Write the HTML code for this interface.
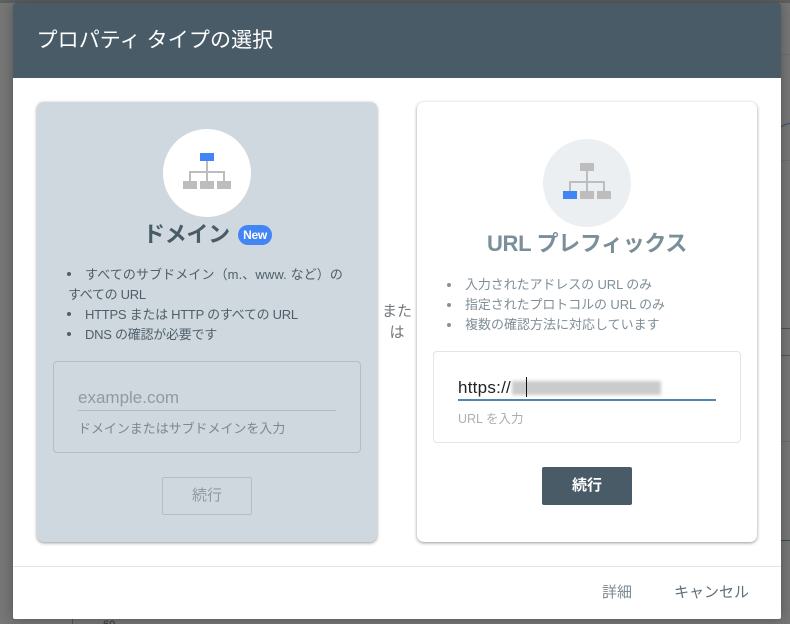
<!DOCTYPE html>
<html lang="ja">
<head>
<meta charset="utf-8">
<style>
html,body{margin:0;padding:0;overflow:hidden;height:624px}
body{width:790px;position:relative;background:#767676;font-family:"Liberation Sans","Noto Sans CJK JP",sans-serif}
.a{position:absolute;white-space:nowrap}
#dialog{position:absolute;left:13px;top:3px;width:768px;height:616px;background:#fff;border-radius:2px;box-shadow:0 0 12px rgba(0,0,0,.3)}
#head{position:absolute;left:13px;top:3px;width:768px;height:75px;background:#485b67;border-radius:2px 2px 0 0}
.card{position:absolute;top:102px;width:340px;height:440px;border-radius:7px;box-shadow:0 1px 3px rgba(60,64,67,.55)}
.li{font-size:13px;line-height:20px}
.dot{position:absolute;width:4px;height:4px;border-radius:50%}
</style>
</head>
<body>
<div class="a" style="left:0;top:0;width:790px;height:3px;background:#5f5f5f"></div>
<div class="a" style="left:781px;top:54px;width:9px;height:1px;background:#6e6e6e"></div>
<div class="a" style="left:781px;top:160px;width:9px;height:1px;background:#6e6e6e"></div>
<div class="a" style="left:781px;top:328px;width:9px;height:1px;background:#4f4f4f"></div>
<div class="a" style="left:781px;top:355px;width:9px;height:1px;background:#555"></div>
<div class="a" style="left:781px;top:441px;width:9px;height:1px;background:#6a6a6a"></div>
<div class="a" style="left:781px;top:540px;width:9px;height:1px;background:#2f5a48"></div>
<svg class="a" style="left:781px;top:120px" width="9" height="12"><path d="M0 7Q4 4 9 3.5" fill="none" stroke="#2e4f78" stroke-width="1"/></svg>
<div class="a" style="left:72px;top:619px;width:1px;height:5px;background:#555"></div>
<div class="a" style="left:103px;top:619px;font-size:11px;line-height:12px;color:#333">60</div>

<div id="dialog"></div>
<div id="head"></div>
<div class="a" style="left:36.5px;top:27px;font-size:21px;line-height:28px;color:#fff;letter-spacing:.1px">プロパティ タイプの選択</div>

<!-- left card -->
<div class="card" style="left:37px;background:#cfd8de"></div>
<div class="a" style="left:163px;top:129px;width:88px;height:88px;border-radius:50%;background:#fff"></div>
<svg class="a" style="left:183px;top:153px" width="48" height="36" viewBox="0 0 48 36">
<path d="M24 8V28M7 28V19H41V28" fill="none" stroke="#bdbdbd" stroke-width="2"/>
<rect x="17" y="0" width="14" height="8" fill="#4285f4"/>
<rect x="0" y="28" width="14" height="8" fill="#bdbdbd"/>
<rect x="17" y="28" width="14" height="8" fill="#bdbdbd"/>
<rect x="34" y="28" width="14" height="8" fill="#bdbdbd"/>
</svg>
<div class="a" style="left:143px;top:219px;font-size:22px;line-height:32px;font-weight:700;color:#485b67;letter-spacing:-.3px">ドメイン</div>
<div class="a" style="left:238px;top:225px;width:34px;height:20px;border-radius:10px;background:#4285f4;color:#fff;font-size:12px;font-weight:700;line-height:20px;text-align:center;letter-spacing:-.3px">New</div>
<div class="dot" style="left:67px;top:272px;background:#4f5f6a"></div>
<div class="a li" style="left:85px;top:265px;color:#4f5f6a;letter-spacing:.1px">すべてのサブドメイン（m.、www. など）の</div>
<div class="a li" style="left:68px;top:285px;color:#4f5f6a;letter-spacing:-.3px">すべての URL</div>
<div class="dot" style="left:67px;top:312px;background:#4f5f6a"></div>
<div class="a li" style="left:85px;top:305px;color:#4f5f6a;letter-spacing:-.27px">HTTPS または HTTP のすべての URL</div>
<div class="dot" style="left:67px;top:332px;background:#4f5f6a"></div>
<div class="a li" style="left:85px;top:325px;color:#4f5f6a;letter-spacing:-.25px">DNS の確認が必要です</div>
<div class="a" style="left:53px;top:361px;width:306px;height:90px;border:1px solid #b4bdc4;border-radius:4px"></div>
<div class="a" style="left:78px;top:387px;font-size:17px;line-height:22px;color:#8f9aa3">example.com</div>
<div class="a" style="left:78px;top:410px;width:258px;height:1px;background:#b0b9c0"></div>
<div class="a" style="left:78px;top:419px;font-size:13px;line-height:20px;color:#7c8891;letter-spacing:-.05px">ドメインまたはサブドメインを入力</div>
<div class="a" style="left:162px;top:477px;width:88px;height:36px;border:1px solid #b4bdc4;border-radius:2px;color:#8f9aa3;font-size:15px;line-height:36px;text-align:center">続行</div>

<!-- または -->
<div class="a" style="left:377px;top:301px;width:40px;text-align:center;font-size:15px;line-height:21px;color:#72777b;white-space:normal">また<br>は</div>

<!-- right card -->
<div class="card" style="left:417px;background:#fff"></div>
<div class="a" style="left:543px;top:139px;width:88px;height:88px;border-radius:50%;background:#eceff1"></div>
<svg class="a" style="left:563px;top:163px" width="48" height="36" viewBox="0 0 48 36">
<path d="M24 8V28M7 28V19H41V28" fill="none" stroke="#bdbdbd" stroke-width="2"/>
<rect x="17" y="0" width="14" height="8" fill="#bdbdbd"/>
<rect x="0" y="28" width="14" height="8" fill="#4285f4"/>
<rect x="17" y="28" width="14" height="8" fill="#bdbdbd"/>
<rect x="34" y="28" width="14" height="8" fill="#bdbdbd"/>
</svg>
<div class="a" style="left:487px;top:228px;font-size:22px;line-height:32px;font-weight:700;color:#7a8f99;letter-spacing:-.35px">URL プレフィックス</div>
<div class="dot" style="left:447px;top:283px;background:#84929b"></div>
<div class="a li" style="left:465px;top:275px;color:#7f8e97;letter-spacing:-.1px">入力されたアドレスの URL のみ</div>
<div class="dot" style="left:447px;top:303px;background:#84929b"></div>
<div class="a li" style="left:465px;top:295px;color:#7f8e97;letter-spacing:-.1px">指定されたプロトコルの URL のみ</div>
<div class="dot" style="left:447px;top:323px;background:#84929b"></div>
<div class="a li" style="left:465px;top:315px;color:#7f8e97">複数の確認方法に対応しています</div>
<div class="a" style="left:433px;top:351px;width:306px;height:90px;border:1px solid #e2e4e6;border-radius:4px"></div>
<div class="a" style="left:458px;top:377px;font-size:17px;line-height:22px;color:#222;letter-spacing:.25px">https://</div>
<div class="a" style="left:512px;top:381px;width:149px;height:14px;background:#cbcbcb;filter:blur(1.5px)"></div>
<div class="a" style="left:526px;top:377px;width:1px;height:20px;background:#111"></div>
<div class="a" style="left:458px;top:399px;width:258px;height:2px;background:#4f87ae"></div>
<div class="a" style="left:458px;top:410px;font-size:12.5px;line-height:18px;color:#aeaeae">URL を入力</div>
<div class="a" style="left:542px;top:467px;width:90px;height:38px;border-radius:2px;background:#485b67;color:#fff;font-size:15px;font-weight:700;line-height:38px;text-align:center">続行</div>

<!-- footer -->
<div class="a" style="left:13px;top:566px;width:768px;height:1px;background:#e3e3e3"></div>
<div class="a" style="left:602px;top:583px;font-size:15px;line-height:20px;color:#7d8a92">詳細</div>
<div class="a" style="left:674px;top:583px;font-size:15px;line-height:20px;color:#5f7079">キャンセル</div>
</body>
</html>
